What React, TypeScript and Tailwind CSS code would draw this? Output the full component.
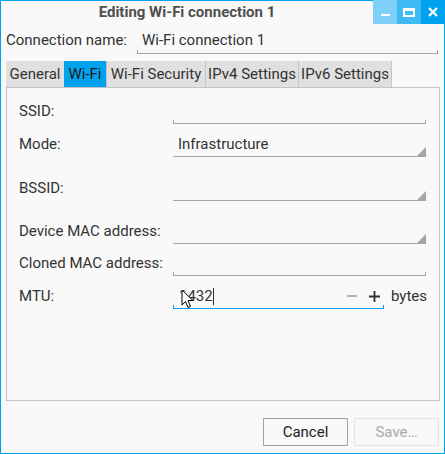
import React from "react";

const font = { fontFamily: "Roboto, 'Noto Sans', sans-serif" };

const Field = ({
  width = "w-[253px]",
  combo = false,
  children,
}: {
  width?: string;
  combo?: boolean;
  children?: React.ReactNode;
}) => (
  <div className={`relative h-[24px] ${width} flex items-center pl-[5px]`}>
    {children}
    {combo ? (
      <>
        <div className="absolute left-0 right-0 bottom-0 h-px bg-[#a5a5a5]" />
        <svg className="absolute right-0 bottom-[1px]" width="9" height="9" viewBox="0 0 9 9">
          <polygon points="9,0 9,9 0,9" fill="#a5a5a5" />
        </svg>
      </>
    ) : (
      <div className="absolute left-0 right-0 bottom-0 h-[4px] border-b border-l border-r border-[#a5a5a5]" />
    )}
  </div>
);

const Row = ({
  label,
  className = "",
  children,
}: {
  label: string;
  className?: string;
  children: React.ReactNode;
}) => (
  <div className={`flex items-center h-[24px] ${className}`}>
    <div className="w-[166px] pl-[12px] -mt-[2px] whitespace-nowrap">{label}</div>
    {children}
  </div>
);

export default function App() {
  const tabs = ["General", "Wi-Fi", "Wi-Fi Security", "IPv4 Settings", "IPv6 Settings"];
  const tabW = ["w-[58px]", "w-[42px]", "w-[99px]", "w-[93px]", "w-[94px]"];

  return (
    <div
      className="relative w-[445px] h-[454px] border border-[#00a2ed] bg-[#f9f9f9] text-[15px] text-[#333] flex flex-col"
      style={font}
    >
      {/* title bar */}
      <div className="flex h-[23px] -mt-px">
        <div className="flex-1 flex items-center justify-center font-bold text-[#505050] pt-px">
          Editing Wi-Fi connection 1
        </div>
        <div className="w-[24px] h-[24px] bg-[#80d0f8] flex items-center justify-center">
          <div className="w-[9px] h-[2px] bg-white mt-[6px]" />
        </div>
        <div className="w-[24px] h-[24px] bg-[#40baf3] flex items-center justify-center">
          <div className="w-[12px] h-[9px] border-2 border-white border-t-[3px]" />
        </div>
        <div className="w-[24px] h-[24px] bg-[#00a2ed] flex items-center justify-center -mr-px">
          <svg width="10" height="10" viewBox="0 0 10 10">
            <path d="M1 1 L9 9 M9 1 L1 9" stroke="white" strokeWidth="2.2" />
          </svg>
        </div>
      </div>

      {/* connection name */}
      <div className="flex items-center h-[24px] mt-[7px] px-[5px]">
        <div className="w-[131px] -mt-[3px] whitespace-nowrap">Connection name:</div>
        <Field width="w-[301px]">
          <span className="-mt-[3px]">Wi-Fi connection 1</span>
        </Field>
      </div>

      {/* tabs */}
      <div className="flex h-[26px] mt-[7px] ml-[5px]">
        {tabs.map((t, i) => (
          <div
            key={t}
            className={`${tabW[i]} flex items-center justify-center whitespace-nowrap ${
              i === 1 ? "bg-[#00a2ed] text-[#1a1a1a]" : "bg-[#e0e0e0]"
            } ${i >= 2 ? "border-l border-[#c4c4c4]" : ""} ${i === 4 ? "border-r" : ""}`}
          >
            {t}
          </div>
        ))}
      </div>

      {/* panel */}
      <div className="ml-[5px] w-[434px] h-[314px] border border-[#c4c4c4] pt-[12px]">
        <Row label="SSID:">
          <Field />
        </Row>
        <Row label="Mode:" className="mt-[9px]">
          <Field combo>
            <span className="-mt-[2px]">Infrastructure</span>
          </Field>
        </Row>
        <Row label="BSSID:" className="mt-[20px]">
          <Field combo />
        </Row>
        <Row label="Device MAC address:" className="mt-[19px]">
          <Field combo />
        </Row>
        <Row label="Cloned MAC address:" className="mt-[8px]">
          <Field />
        </Row>
        <Row label="MTU:" className="mt-[9px]">
          <div className="relative h-[24px] w-[211px] flex items-center pl-[6px]">
            <span className="-mt-[2px]">1432</span>
            <div className="w-px h-[17px] bg-[#333] -mt-[2px]" />
            <div className="flex-1" />
            <div className="w-[10px] h-[1.5px] bg-[#b4b4b4] mr-[12px] -mt-[2px]" />
            <svg className="mr-[4px] -mt-[2px]" width="11" height="11" viewBox="0 0 11 11">
              <path d="M0 5.5 H11 M5.5 0 V11" stroke="#333" strokeWidth="1.8" />
            </svg>
            <div className="absolute left-0 right-0 bottom-0 h-[4px] border-b border-l border-r border-[#0ea0ea]" />
          </div>
          <div className="ml-[7px] -mt-[2px]">bytes</div>
        </Row>
      </div>

      {/* buttons */}
      <div className="flex justify-end gap-[6px] mt-[17px] mr-[5px]">
        <div className="w-[85px] h-[28px] border border-[#a3a3a3] flex items-center justify-center text-[#222]">
          Cancel
        </div>
        <div className="w-[85px] h-[28px] border border-[#e2e2e2] flex items-center justify-center text-[#a8a8a8]">
          Save…
        </div>
      </div>

      {/* mouse pointer */}
      <svg className="absolute left-[180px] top-[288px]" width="13" height="20" viewBox="0 0 13 20">
        <path d="M1 1 L1 16 L4.5 12.5 L7 18.5 L9.5 17.5 L7 11.5 L12 11.5 Z" fill="white" stroke="black" strokeWidth="1" strokeLinejoin="round" />
      </svg>
    </div>
  );
}
